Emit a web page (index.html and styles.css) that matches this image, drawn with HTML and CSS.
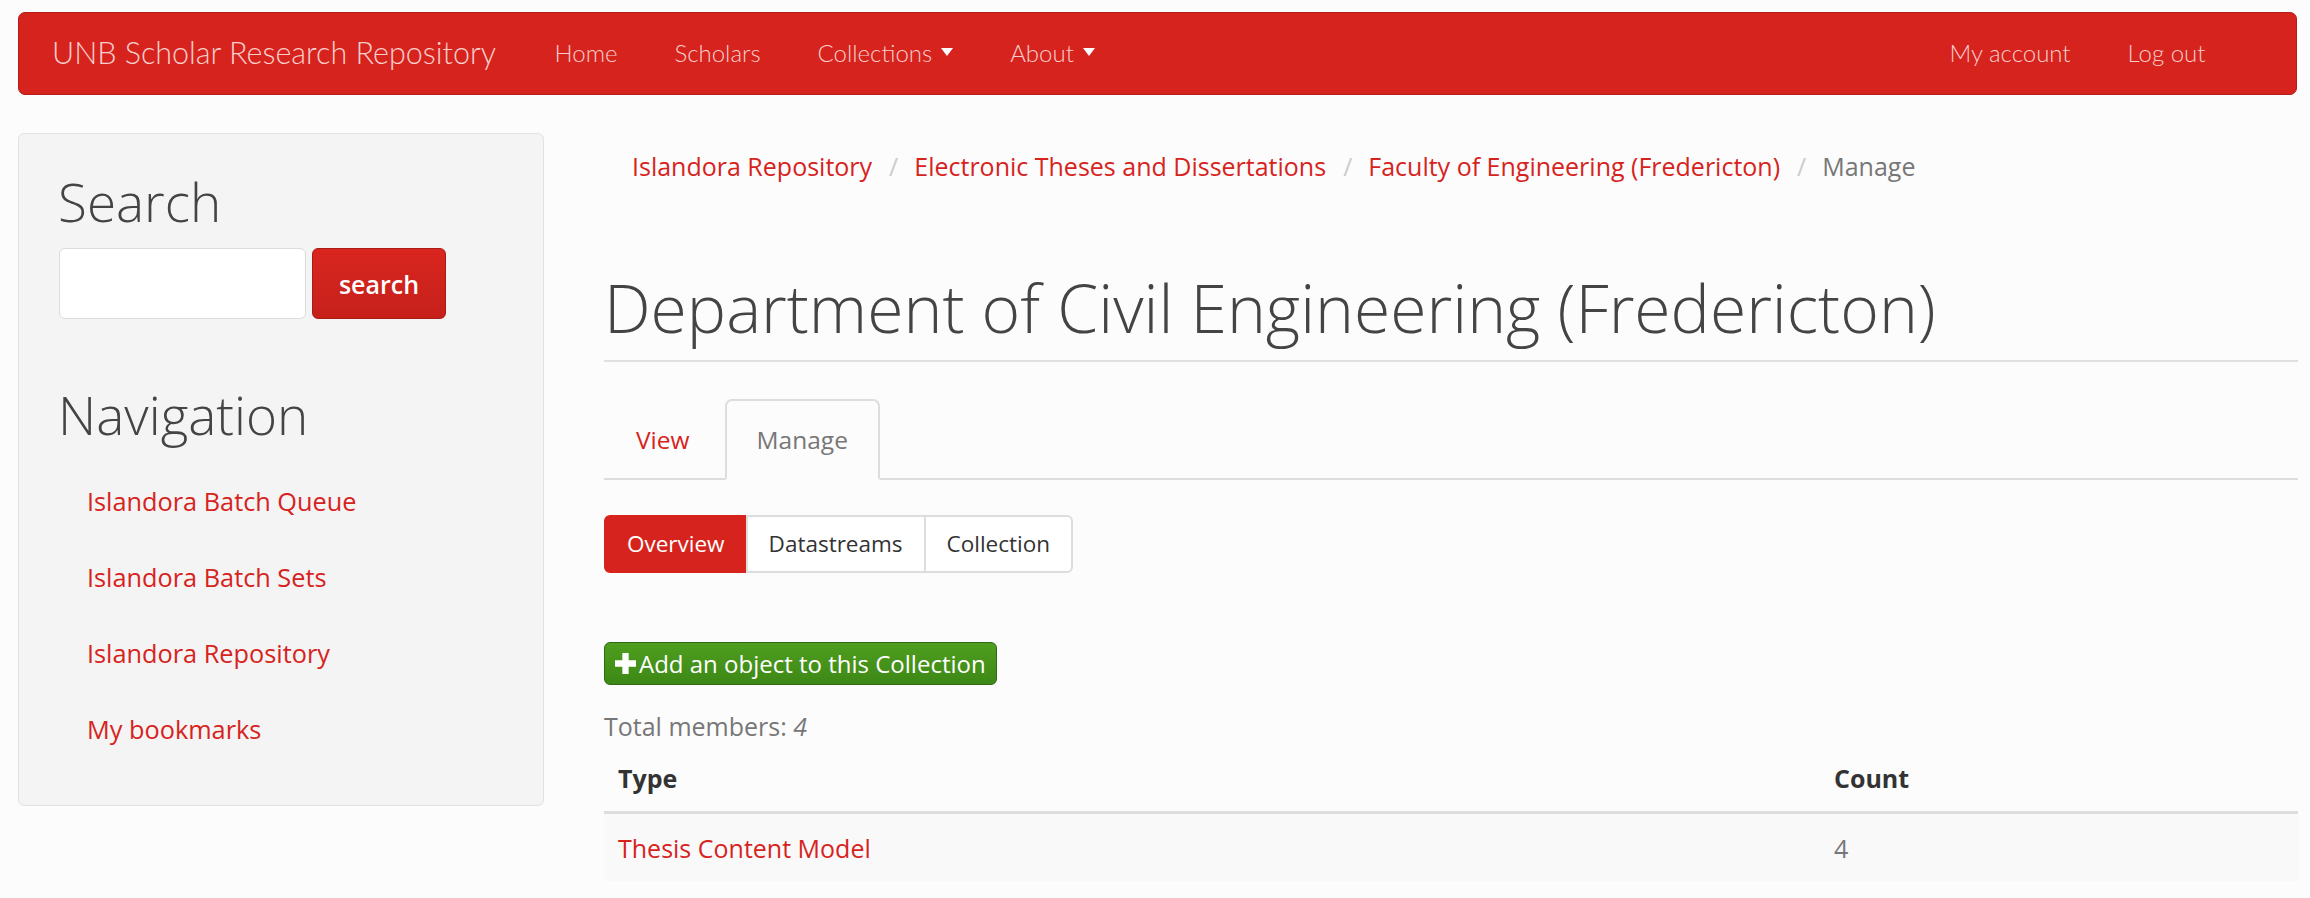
FILE: index.html
```html
<!DOCTYPE html>
<html lang="en">
<head>
<meta charset="utf-8">
<title>Department of Civil Engineering (Fredericton) | UNB Scholar Research Repository</title>
<link rel="stylesheet" href="styles.css">
</head>
<body>
<header class="navbar">
  <a class="brand" href="#">UNB Scholar Research Repository</a>
  <ul class="nav-links">
    <li><a href="#">Home</a></li>
    <li><a href="#">Scholars</a></li>
    <li><a href="#">Collections<span class="caret"></span></a></li>
    <li><a href="#">About<span class="caret"></span></a></li>
  </ul>
  <ul class="nav-links nav-right">
    <li><a href="#">My account</a></li>
    <li><a href="#">Log out</a></li>
  </ul>
</header>

<div class="page">
  <aside class="sidebar">
    <h2 class="block-title">Search</h2>
    <form class="search-form">
      <input class="search-input" type="text" aria-label="Search">
      <button class="search-btn" type="button">search</button>
    </form>
    <h2 class="block-title nav-title">Navigation</h2>
    <ul class="side-nav">
      <li><a href="#">Islandora Batch Queue</a></li>
      <li><a href="#">Islandora Batch Sets</a></li>
      <li><a href="#">Islandora Repository</a></li>
      <li><a href="#">My bookmarks</a></li>
    </ul>
  </aside>

  <main class="content">
    <ol class="breadcrumb">
      <li><a href="#">Islandora Repository</a></li>
      <li><a href="#">Electronic Theses and Dissertations</a></li>
      <li><a href="#">Faculty of Engineering (Fredericton)</a></li>
      <li class="active">Manage</li>
    </ol>

    <h1 class="page-title">Department of Civil Engineering (Fredericton)</h1>

    <ul class="tabs">
      <li><a href="#">View</a></li>
      <li class="active"><a href="#">Manage</a></li>
    </ul>

    <div class="btn-group">
      <a class="seg active" href="#">Overview</a>
      <a class="seg" href="#">Datastreams</a>
      <a class="seg" href="#">Collection</a>
    </div>

    <a class="add-btn" href="#"><svg class="plus" viewBox="0 0 20 20" width="20" height="20" aria-hidden="true"><path d="M7 0h6v7h7v6h-7v7H7v-7H0V7h7z" fill="#fff"/></svg>Add an object to this Collection</a>

    <p class="total">Total members: <em>4</em></p>

    <table class="members">
      <thead>
        <tr><th class="col-type">Type</th><th>Count</th></tr>
      </thead>
      <tbody>
        <tr><td><a href="#">Thesis Content Model</a></td><td class="count">4</td></tr>
      </tbody>
    </table>
  </main>
</div>
</body>
</html>
```

FILE: styles.css
```css
* { box-sizing: border-box; }

html, body {
  margin: 0;
  padding: 0;
}

body {
  background: #fcfcfc;
  font-family: "Open Sans", "Liberation Sans", sans-serif;
  font-size: 25px;
  line-height: 35px;
  color: #333;
}

a { color: #d7231d; text-decoration: none; }

ul, ol { list-style: none; margin: 0; padding: 0; }

/* ---------- Navbar ---------- */
.navbar {
  display: flex;
  align-items: center;
  height: 83px;
  margin: 12px 13px 0 18px;
  padding: 0 62px 3px 33px;
  background: #d7231d;
  border: 1px solid #b41d18;
  border-radius: 7px;
  font-family: Lato, "Open Sans", sans-serif;
  font-weight: 300;
}

.brand {
  color: #f8cfcc;
  font-size: 30.5px;
  margin-right: 30px;
  white-space: nowrap;
}

.nav-links {
  display: flex;
}

.nav-links a {
  display: flex;
  align-items: center;
  padding: 0 28.5px;
  color: #f8cfcc;
  font-size: 24px;
  white-space: nowrap;
}

.nav-right { margin-left: auto; }

.caret {
  display: inline-block;
  width: 0;
  height: 0;
  margin-left: 9px;
  border-top: 8px solid #fff;
  border-left: 6px solid transparent;
  border-right: 6px solid transparent;
}

/* ---------- Page ---------- */
.page {
  display: flex;
  align-items: flex-start;
  gap: 60px;
  padding: 0 12px 0 18px;
  margin-top: 38px;
}

/* ---------- Sidebar ---------- */
.sidebar {
  flex: 0 0 526px;
  background: #f4f4f4;
  border: 1.5px solid #e2e2e2;
  border-radius: 6px;
  padding: 39px 39px 38px 39px;
}

.block-title {
  margin: 0 0 17px;
  font-size: 53px;
  line-height: 58px;
  font-weight: 300;
  color: #444;
}

.search-form {
  display: flex;
  gap: 6px;
  margin: 0 0 0 1px;
}

.search-input {
  width: 247px;
  height: 71px;
  background: #fff;
  border: 1.5px solid #dcdcdc;
  border-radius: 6px;
  font: inherit;
}

.search-btn {
  width: 134px;
  height: 71px;
  background: linear-gradient(#d9261f, #c6201b);
  border: 1.5px solid #a91b16;
  border-radius: 6px;
  color: #fff;
  font-family: "Open Sans", sans-serif;
  font-size: 25px;
  font-weight: 600;
  padding: 0;
}

.nav-title { margin-top: 67px; margin-bottom: 19px; }

.side-nav a {
  display: block;
  padding: 20.5px 29px;
  line-height: 35px;
  font-size: 25.3px;
}

/* ---------- Main content ---------- */
.content {
  flex: 1;
  min-width: 0;
}

.breadcrumb {
  display: flex;
  flex-wrap: wrap;
  margin: 2px 0 74px;
  padding: 14px 28px;
}

.breadcrumb li + li::before {
  content: "/";
  color: #ccc;
  padding: 0 16px 0 17px;
}

.breadcrumb .active { color: #777; }

.page-title {
  margin: 0;
  padding-bottom: 18px;
  border-bottom: 2px solid #e0e0e0;
  font-size: 66px;
  line-height: 70px;
  font-weight: 300;
  color: #444;
}

.tabs {
  display: flex;
  margin-top: 37px;
  border-bottom: 2px solid #ddd;
}

.tabs li { margin-bottom: -2px; margin-right: 3px; }

.tabs a {
  display: block;
  padding: 21px 30px;
  line-height: 35px;
  font-size: 24.5px;
  border: 2px solid transparent;
  border-radius: 7px 7px 0 0;
}

.tabs .active a {
  color: #777;
  background: #fcfcfc;
  border-color: #ddd #ddd transparent;
}

.btn-group {
  display: flex;
  margin-top: 35px;
  width: max-content;
}

.seg {
  display: block;
  height: 58px;
  line-height: 54px;
  padding: 0 21px;
  background: #fff;
  border: 2px solid #ddd;
  color: #333;
  font-size: 22.5px;
}

.seg + .seg { margin-left: -2px; }
.seg:first-child { border-radius: 6px 0 0 6px; }
.seg:last-child { border-radius: 0 6px 6px 0; }

.seg.active {
  background: #d7231d;
  border-color: #d7231d;
  color: #fff;
}

.add-btn {
  display: flex;
  align-items: center;
  width: max-content;
  height: 43px;
  margin-top: 69px;
  padding: 0 10px 0 10px;
  background: linear-gradient(#4e9e1f, #3d8816);
  border: 1.5px solid #2f6a12;
  border-radius: 6px;
  color: #fff;
  font-size: 24px;
  line-height: 35px;
}

.plus { width: 21px; height: 21px; margin-right: 3px; }

.total {
  margin: 24px 0 0;
  color: #777;
}

.members {
  width: 100%;
  margin-top: 3px;
  border-collapse: collapse;
}

.members th {
  text-align: left;
  font-weight: 700;
  padding: 14px 14px 15px;
  border-bottom: 3.5px solid #ddd;
}

.members th.col-type { width: 1216px; }

.members td {
  padding: 17px 14px 15px;
  background: #f9f9f9;
}

.members td.count { color: #777; }
```
